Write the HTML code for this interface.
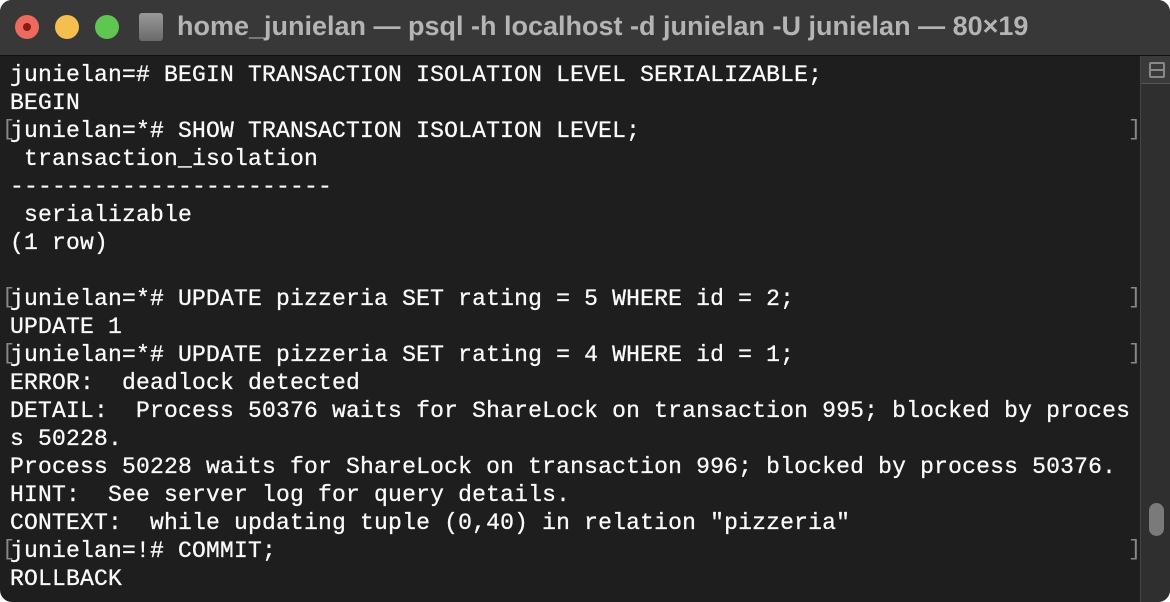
<!DOCTYPE html>
<html><head><meta charset="utf-8"><style>
html,body{margin:0;padding:0;background:#fff;width:1170px;height:602px;overflow:hidden}
.win{position:absolute;left:0;top:0;width:1170px;height:602px;border-radius:12px;overflow:hidden;background:#1e1e1e}
.tb{position:absolute;left:0;top:0;width:1170px;height:55px;background:#383838;border-bottom:1px solid #111}
.dot{position:absolute;top:15px;width:24px;height:24px;border-radius:50%}
.title{position:absolute;left:177px;top:11px;font:bold 27px "Liberation Sans",sans-serif;color:#b4b4b4;white-space:nowrap}
.term{position:absolute;left:10px;top:61px;font:23px/28px "Liberation Mono",monospace;color:#fafafa;white-space:pre;letter-spacing:0.2px;-webkit-text-stroke:0.3px #fafafa}
.sb{position:absolute;left:1140px;top:56px;width:30px;height:546px;background:#2f2f2f;border-left:1px solid #444}
.br{position:absolute;left:1128px;font:22px "Liberation Mono",monospace;color:#888}
.bl{position:absolute;left:2px;font:22px "Liberation Mono",monospace;color:#888}
</style></head><body>
<div class="win">
<div class="tb">
<div class="dot" style="left:15px;background:#ec6a5e"><div style="position:absolute;left:8px;top:8px;width:8px;height:8px;border-radius:50%;background:#8b1a10"></div></div>
<div class="dot" style="left:55px;background:#f4bf4f"></div>
<div class="dot" style="left:95px;background:#61c554"></div>
<div style="position:absolute;left:139px;top:13px;width:24px;height:28px;border-radius:3px;background:linear-gradient(#999,#6a6a6a);"></div>
<div class="title">home_junielan — psql -h localhost -d junielan -U junielan — 80×19</div>
</div>
<div class="term">junielan=# BEGIN TRANSACTION ISOLATION LEVEL SERIALIZABLE;
BEGIN
junielan=*# SHOW TRANSACTION ISOLATION LEVEL;
 transaction_isolation
-----------------------
 serializable
(1 row)

junielan=*# UPDATE pizzeria SET rating = 5 WHERE id = 2;
UPDATE 1
junielan=*# UPDATE pizzeria SET rating = 4 WHERE id = 1;
ERROR:  deadlock detected
DETAIL:  Process 50376 waits for ShareLock on transaction 995; blocked by proces
s 50228.
Process 50228 waits for ShareLock on transaction 996; blocked by process 50376.
HINT:  See server log for query details.
CONTEXT:  while updating tuple (0,40) in relation "pizzeria"
junielan=!# COMMIT;
ROLLBACK</div>
<div class="bl" style="top:117px">[</div><div class="br" style="top:117px">]</div>
<div class="bl" style="top:285px">[</div><div class="br" style="top:285px">]</div>
<div class="bl" style="top:341px">[</div><div class="br" style="top:341px">]</div>
<div class="bl" style="top:537px">[</div><div class="br" style="top:537px">]</div>
<div class="sb">
<div style="position:absolute;left:0;top:0;width:30px;height:27px;background:#3a3a3a;border-bottom:1px solid #555"></div>
<div style="position:absolute;left:8px;top:6px;width:12px;height:12px;border:2px solid #888;border-radius:2px"></div>
<div style="position:absolute;left:8px;top:13px;width:16px;height:2px;background:#888"></div>
<div style="position:absolute;left:8px;top:447px;width:15px;height:33px;border-radius:8px;background:#7a7a7a"></div>
</div>
</div>
</body></html>
